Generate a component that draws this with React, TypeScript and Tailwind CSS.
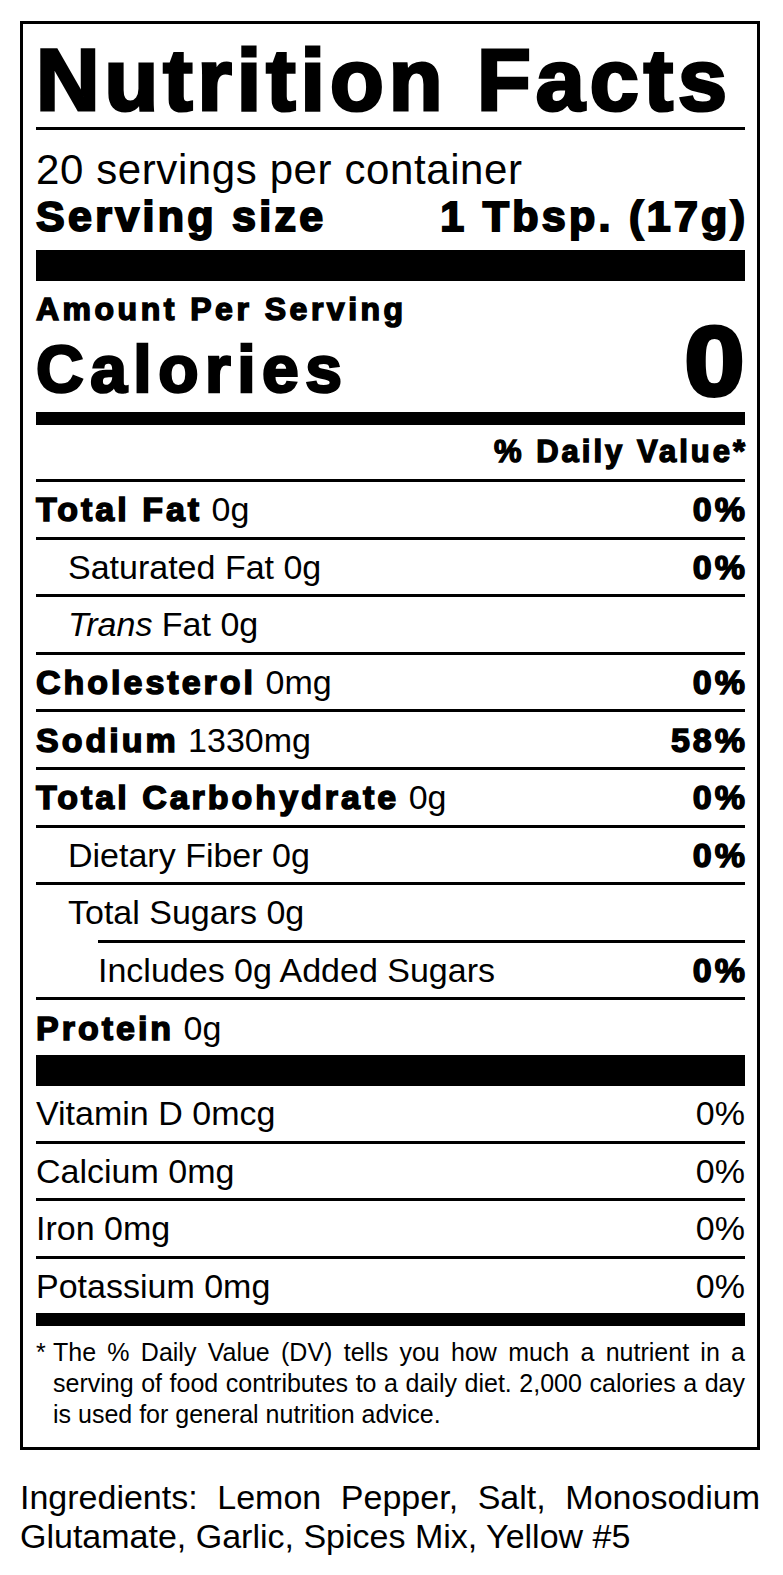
import type { ReactNode } from 'react';

type Nutrient = {
  label: ReactNode;
  amount: string;
  dv?: string;
  sub?: boolean;
  inset?: boolean;
};

const heavy = 'font-bold tracking-[3px] [-webkit-text-stroke:1.5px_#000]';

const nutrients: Nutrient[] = [
  { label: <span className={heavy}>Total Fat</span>, amount: '0g', dv: '0%' },
  { label: 'Saturated Fat', amount: '0g', dv: '0%', sub: true },
  { label: <><i>Trans</i> Fat</>, amount: '0g', sub: true },
  { label: <span className={heavy}>Cholesterol</span>, amount: '0mg', dv: '0%' },
  { label: <span className={heavy}>Sodium</span>, amount: '1330mg', dv: '58%' },
  { label: <span className={heavy}>Total Carbohydrate</span>, amount: '0g', dv: '0%' },
  { label: 'Dietary Fiber', amount: '0g', dv: '0%', sub: true },
  { label: 'Total Sugars', amount: '0g', sub: true },
  { label: 'Includes 0g Added Sugars', amount: '', dv: '0%', inset: true },
  { label: <span className={heavy}>Protein</span>, amount: '0g' },
];

const vitamins = [
  { name: 'Vitamin D', amount: '0mcg' },
  { name: 'Calcium', amount: '0mg' },
  { name: 'Iron', amount: '0mg' },
  { name: 'Potassium', amount: '0mg' },
];

function NutrientRow({ n }: { n: Nutrient }) {
  return (
    <div
      className={`flex h-[57.6px] items-center justify-between border-t-[3px] border-black text-[34px] leading-[34px] ${
        n.inset ? 'ml-[62px]' : ''
      } ${n.sub ? 'pl-[32px]' : ''}`}
    >
      <span>
        {n.label}
        {n.amount && ` ${n.amount}`}
      </span>
      {n.dv && (
        <span className="mr-[-3px] font-bold tracking-[3px] [-webkit-text-stroke:1.5px_#000]">{n.dv}</span>
      )}
    </div>
  );
}

export default function App() {
  return (
    <div className="min-h-[1575px] w-[783px] bg-white pt-[21px] font-['Liberation_Sans',Arial,sans-serif] text-black">
      <div className="ml-[20px] w-[740px] border-[3px] border-black pb-[16.5px] pl-[13px] pr-[12px]">
        <h1 className="mt-[11.5px] h-[91.5px] whitespace-nowrap text-[88px] font-bold leading-[88px] tracking-[5px] [-webkit-text-stroke:3.2px_#000]">
          Nutrition Facts
        </h1>
        <div className="h-[3px] bg-black" />

        <p className="mt-[17px] h-[46px] text-[42px] leading-[46px] tracking-[0.6px]">20 servings per container</p>
        <div className="flex h-[46px] justify-between text-[43px] font-bold leading-[46px] tracking-[3.3px] [-webkit-text-stroke:2px_#000]">
          <span>Serving size</span>
          <span className="mr-[-3.3px]">1 Tbsp. (17g)</span>
        </div>
        <div className="mt-[11px] h-[31px] bg-black" />

        <p className="mt-[10.6px] h-[34px] text-[32px] font-bold leading-[34px] tracking-[3.5px] [-webkit-text-stroke:1.5px_#000]">
          Amount Per Serving
        </p>
        <div className="flex h-[86.4px] items-end justify-between">
          <span className="mb-[10px] text-[66px] font-bold leading-none tracking-[6.5px] [-webkit-text-stroke:2.6px_#000]">
            Calories
          </span>
          <span className="mb-[2px] inline-block origin-right scale-x-110 text-[98px] font-bold leading-none [-webkit-text-stroke:4px_#000]">
            0
          </span>
        </div>
        <div className="h-[13px] bg-black" />

        <p className="h-[54px] text-right text-[31px] font-bold leading-[54px] tracking-[3px] [-webkit-text-stroke:1.4px_#000]">
          <span className="mr-[-3px]">% Daily Value*</span>
        </p>

        {nutrients.map((n, i) => (
          <NutrientRow key={i} n={n} />
        ))}
        <div className="h-[31px] bg-black" />

        {vitamins.map((v, i) => (
          <div
            key={v.name}
            className={`flex items-center justify-between text-[34px] leading-[34px] ${
              i === 0 ? 'h-[54.6px]' : 'h-[57.6px] border-t-[3px] border-black'
            }`}
          >
            <span>
              {v.name} {v.amount}
            </span>
            <span>0%</span>
          </div>
        ))}
        <div className="h-[13px] bg-black" />

        <div className="mt-[11px] flex text-[25px] leading-[31px]">
          <span className="w-[17px] shrink-0">*</span>
          <p className="text-justify">
            The % Daily Value (DV) tells you how much a nutrient in a serving of food contributes to a daily diet. 2,000
            calories a day is used for general nutrition advice.
          </p>
        </div>
      </div>

      <p className="ml-[20px] mt-[28px] w-[740px] text-justify text-[34px] leading-[39px]">
        Ingredients: Lemon Pepper, Salt, Monosodium Glutamate, Garlic, Spices Mix, Yellow #5
      </p>
    </div>
  );
}
